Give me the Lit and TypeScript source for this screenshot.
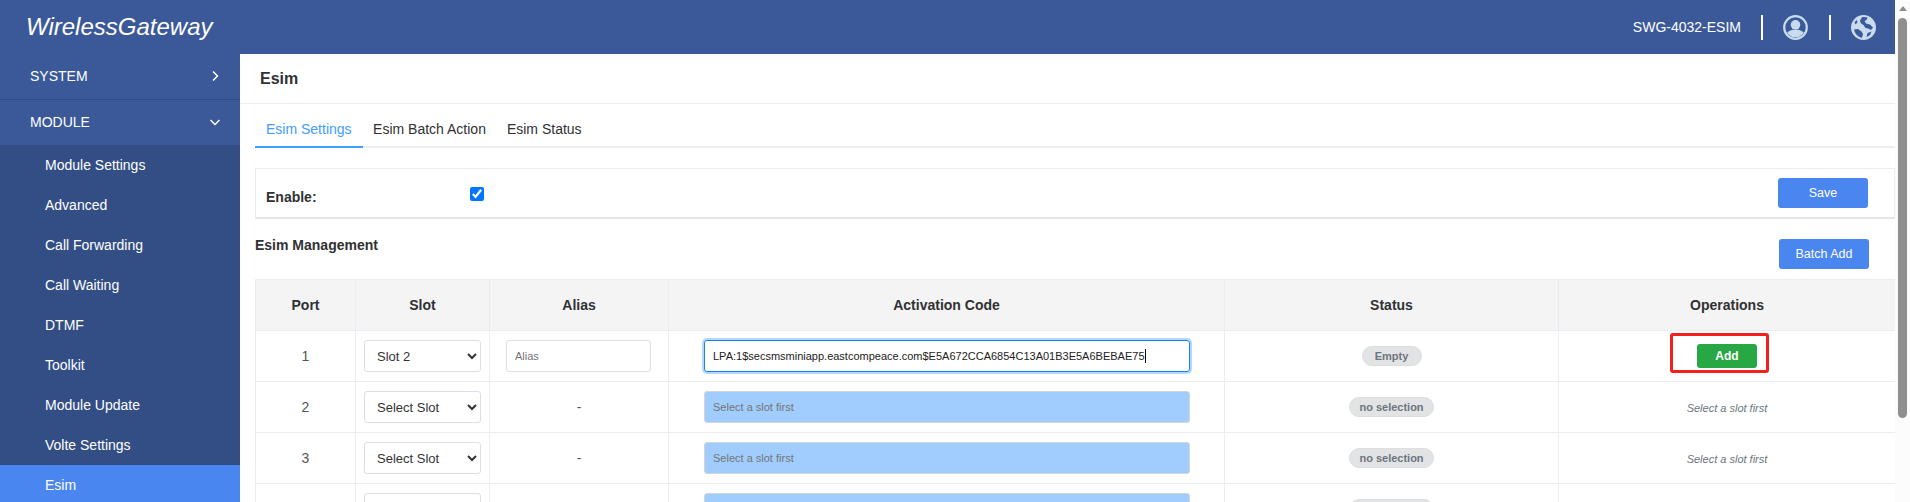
import { LitElement, html, css, svg } from "lit";
import { customElement } from "lit/decorators.js";

const SUB = ["Module Settings", "Advanced", "Call Forwarding", "Call Waiting", "DTMF", "Toolkit", "Module Update", "Volte Settings", "Esim"];
const ROWS = [
  { port: 1, slot: "Slot 2", status: "Empty" },
  { port: 2, slot: "Select Slot", status: "no selection" },
  { port: 3, slot: "Select Slot", status: "no selection" },
  { port: 4, slot: "Select Slot", status: "no selection" },
];
const CODE = "LPA:1$secsmsminiapp.eastcompeace.com$E5A672CCA6854C13A01B3E5A6BEBAE75";

const userIcon = svg`<svg class="icon" viewBox="0 0 25 25" width="25" height="25">
  <defs><clipPath id="uc"><circle cx="12.5" cy="12.5" r="9.8"/></clipPath></defs>
  <circle cx="12.5" cy="12.5" r="11.3" fill="none" stroke="#c9dcef" stroke-width="2.2"/>
  <circle cx="12.5" cy="9.8" r="4.8" fill="#c9dcef"/>
  <ellipse cx="12.5" cy="22" rx="10.5" ry="7.4" fill="#c9dcef" clip-path="url(#uc)"/>
</svg>`;

const globeIcon = svg`<svg class="icon" viewBox="0 0 25 25" width="25" height="25">
  <circle cx="12.5" cy="12.5" r="12.5" fill="#c9dcef"/>
  <path fill="#3b5998" d="M11 2.2 C13 1.8 15 2 16.5 2.6 L15.5 5 L13.5 6 L15 8.5 L19 9.5 L22 12.5 L20 15 L17 13.5 L14.5 13 L12.5 10 L10 8.5 L9 5.5 Z"/>
  <path fill="#3b5998" d="M3 14.5 L7 14 L10.5 16.5 L12 19 L11 22.8 C7 22 4 19 3 14.5 Z"/>
  <path fill="#3b5998" d="M16.5 18 L20.5 16.5 L19 20 L15.5 22.3 Z"/>
  <path fill="#3b5998" d="M3.5 7.5 L5.5 5 L6.5 7 L4.8 9.5 Z"/>
</svg>`;

@customElement("app-root")
export class AppRoot extends LitElement {
  static styles = css`
    :host {
      display: block;
      height: 502px;
      overflow: hidden;
      font-family: "Liberation Sans", Arial, sans-serif;
      color: #303133;
      background: #fff;
    }
    * { box-sizing: border-box; }
    .page { display: flex; height: 502px; overflow: hidden; }
    .app { flex: 1; min-width: 0; display: flex; flex-direction: column; }

    .scrollbar { width: 15px; background: #fcfcfc; display: flex; flex-direction: column; align-items: center; }
    .arrow { width: 0; height: 0; margin-top: 6px; border-left: 4.5px solid transparent; border-right: 4.5px solid transparent; border-bottom: 5px solid #8f8f8f; }
    .thumb { width: 9px; height: 400px; margin-top: 7px; border-radius: 5px; background: #8f8f8f; }

    header { height: 54px; flex: none; background: #3b5998; display: flex; align-items: center; padding: 0 19px 0 26px; color: #fff; }
    .logo { font-size: 24px; font-style: italic; flex: 1; }
    .model { font-size: 14px; margin-right: 20px; }
    .sep { width: 2px; height: 25px; background: #fff; }
    .icon { display: block; }
    .user { margin: 0 21px 0 20px; }
    .globe { margin-left: 20px; }

    .body { flex: 1; min-height: 0; display: flex; }
    aside { width: 240px; flex: none; background: #334e85; color: #fff; font-size: 14px; }
    .top { height: 46px; display: flex; align-items: center; justify-content: space-between; padding: 0 19px 2px 30px; background: #3b5998; }
    .top.first { border-bottom: 1px solid #2f4c84; }
    .top.second { height: 45px; padding-bottom: 1px; }
    .top svg { display: block; }
    .sub { height: 40px; display: flex; align-items: center; padding-left: 45px; }
    .sub.active { background: #4a86f0; }

    main { flex: 1; min-width: 0; }
    .title { height: 50px; padding: 0 0 0 20px; display: flex; align-items: center; font-size: 16px; font-weight: bold; border-bottom: 1px solid #eeeef0; }
    .inner { padding-left: 15px; }
    .tabs { display: flex; height: 44px; border-bottom: 2px solid #eeeeee; margin-bottom: 20px; align-items: stretch; }
    .tab { padding: 7px 11px 0; font-size: 14px; display: flex; align-items: center; margin-bottom: -2px; border-bottom: 2px solid transparent; }
    .tab + .tab { padding: 7px 10.5px 0; }
    .tab.active { color: #409eff; border-bottom-color: #409eff; }
    .box { height: 51px; display: flex; align-items: center; border: 1px solid #ecedf2; border-bottom: 2px solid #e4e5ec; padding: 0 26px 0 10px; }
    .box label { width: 204px; font-size: 14px; font-weight: bold; padding-top: 8px; }
    .box input { margin: 1px 0 0; width: 14px; height: 14px; }
    .grow { flex: 1; }
    .btn { width: 90px; height: 30px; border: none; border-radius: 3px; background: #4a86f0; color: #fff; font: 12.5px "Liberation Sans", Arial, sans-serif; display: flex; align-items: center; justify-content: center; }
    .mgmt { height: 60px; display: flex; align-items: flex-start; justify-content: space-between; padding: 20px 26px 0 0; }
    .mgmt h3 { margin: 0; font-size: 14px; font-weight: bold; line-height: 12px; }

    table { width: 100%; table-layout: fixed; border-collapse: collapse; font-size: 14px; }
    th, td { border: 1px solid #ecedf2; height: 51px; padding: 0; text-align: center; }
    td { color: #555; position: relative; }
    th { background: #f4f4f4; font-weight: bold; font-size: 14px; color: #303133; }
    .c1 { width: 100px; } .c2 { width: 134px; } .c3 { width: 179px; }
    .c4 { width: 556px; } .c5 { width: 334px; } .c6 { width: 337px; }
    select { display: block; width: 117px; height: 32px; margin: 0 auto 0 8px; border: 1px solid #dcdfe6; border-radius: 3px; background: #fff; color: #333; font: 13px "Liberation Sans", Arial, sans-serif; padding: 0 8px; }
    .alias { display: block; width: 145px; height: 32px; margin-left: 16px; border: 1px solid #dcdfe6; border-radius: 3px; padding: 0 8px; font: 11px "Liberation Sans", Arial, sans-serif; }
    .alias::placeholder { color: #757575; }
    .code { width: 486px; height: 32px; margin-left: 35px; border-radius: 3px; display: flex; align-items: center; padding: 0 8px; font-size: 11px; text-align: left; white-space: nowrap; }
    .code.focus { border: 1px solid #1a7fe8; box-shadow: 0 0 0 2px #b3d7ff; color: #222; }
    .code.off { background: #a0cdfd; border: 1px solid #d2d6db; color: #757575; }
    .caret { width: 1px; height: 14px; background: #111; display: inline-block; }
    .pill { display: inline-block; min-width: 60px; height: 20px; line-height: 18px; padding: 0 9px; border: 1px solid #dcdee0; border-radius: 10px; background: #e2e3e5; color: #6c757d; font-size: 11px; font-weight: bold; }
    .add { width: 60px; height: 24px; margin: 0 auto; border: none; border-radius: 3px; background: #28a745; color: #fff; font: bold 12px "Liberation Sans", Arial, sans-serif; display: flex; align-items: center; justify-content: center; }
    .hint { font-size: 11px; font-style: italic; color: #6c757d; }
    .mark { position: absolute; left: 111px; top: 2px; width: 99px; height: 40px; border: 3px solid #f5201e; border-radius: 3px; pointer-events: none; }
  `;

  private chevron(down: boolean) {
    return html`<svg width="12" height="12" viewBox="0 0 12 12"><path fill="none" stroke="#fff" stroke-width="1.5" d="${down ? "M1.5 4l4.5 4.5 4.5-4.5" : "M4 1.5l4.5 4.5-4.5 4.5"}"/></svg>`;
  }

  render() {
    return html`<div class="page">
      <div class="app">
        <header>
          <div class="logo">WirelessGateway</div>
          <div class="model">SWG-4032-ESIM</div>
          <div class="sep"></div>
          <div class="user">${userIcon}</div>
          <div class="sep"></div>
          <div class="globe">${globeIcon}</div>
        </header>
        <div class="body">
          <aside>
            <div class="top first"><span>SYSTEM</span>${this.chevron(false)}</div>
            <div class="top second"><span>MODULE</span>${this.chevron(true)}</div>
            ${SUB.map((s) => html`<div class="sub ${s === "Esim" ? "active" : ""}">${s}</div>`)}
          </aside>
          <main>
            <div class="title">Esim</div>
            <div class="inner">
              <div class="tabs">
                <div class="tab active">Esim Settings</div>
                <div class="tab">Esim Batch Action</div>
                <div class="tab">Esim Status</div>
              </div>
              <div class="box">
                <label>Enable:</label>
                <input type="checkbox" checked />
                <div class="grow"></div>
                <button class="btn">Save</button>
              </div>
              <div class="mgmt"><h3>Esim Management</h3><button class="btn">Batch Add</button></div>
              <table>
                <colgroup><col class="c1"/><col class="c2"/><col class="c3"/><col class="c4"/><col class="c5"/><col class="c6"/></colgroup>
                <thead><tr><th>Port</th><th>Slot</th><th>Alias</th><th>Activation Code</th><th>Status</th><th>Operations</th></tr></thead>
                <tbody>
                  ${ROWS.map((r) => html`<tr>
                    <td>${r.port}</td>
                    <td><select><option>${r.slot}</option></select></td>
                    <td>${r.port === 1 ? html`<input class="alias" placeholder="Alias" />` : "-"}</td>
                    <td>${r.port === 1
                      ? html`<div class="code focus">${CODE}<span class="caret"></span></div>`
                      : html`<div class="code off">Select a slot first</div>`}</td>
                    <td><span class="pill">${r.status}</span></td>
                    <td>${r.port === 1
                      ? html`<button class="add">Add</button><div class="mark"></div>`
                      : html`<span class="hint">Select a slot first</span>`}</td>
                  </tr>`)}
                </tbody>
              </table>
            </div>
          </main>
        </div>
      </div>
      <div class="scrollbar"><div class="arrow"></div><div class="thumb"></div></div>
    </div>`;
  }
}
